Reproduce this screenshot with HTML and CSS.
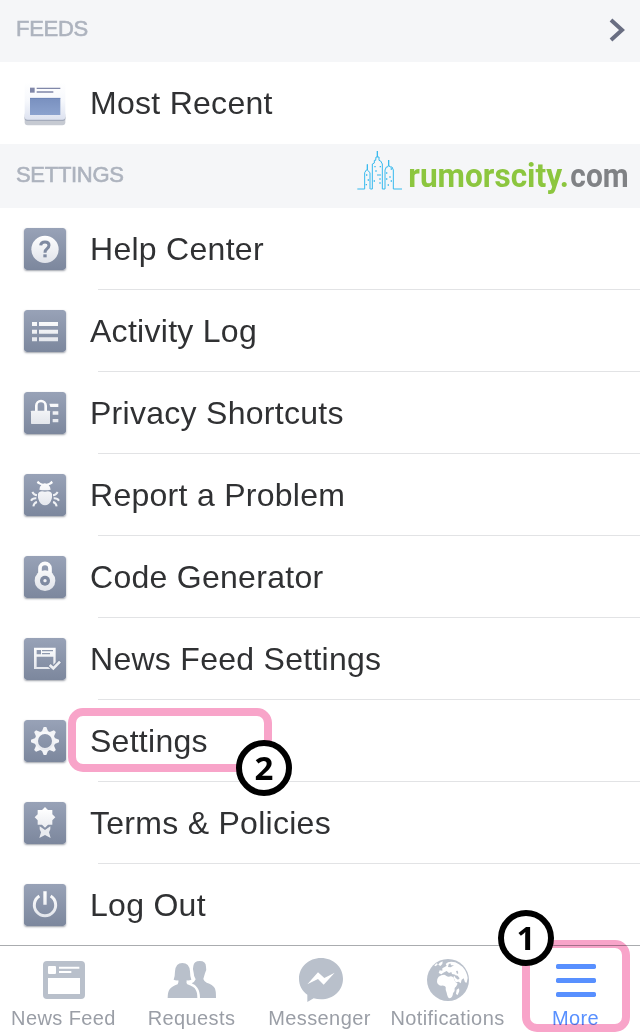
FILE: index.html
```
<!DOCTYPE html>
<html lang="en">
<head>
    <meta charset="UTF-8">
    <meta name="viewport" content="width=device-width, initial-scale=1.0">
    <title>More</title>
    <link rel="stylesheet" href="styles.css">
</head>
<body>
    <!-- Shared gradients -->
    <svg class="defs" width="0" height="0">
        <defs>
            <linearGradient id="tile" x1="0" y1="0" x2="0" y2="1">
                <stop offset="0" stop-color="#98a2b7"/>
                <stop offset="1" stop-color="#7c879d"/>
            </linearGradient>
            <linearGradient id="glyph" gradientUnits="userSpaceOnUse" x1="0" y1="20" x2="0" y2="108">
                <stop offset="0" stop-color="#ffffff"/>
                <stop offset="1" stop-color="#dfe2e9"/>
            </linearGradient>
            <linearGradient id="paper" x1="0" y1="0" x2="0" y2="1">
                <stop offset="0" stop-color="#ffffff"/>
                <stop offset="0.5" stop-color="#f6f8fc"/>
                <stop offset="1" stop-color="#dde2f0"/>
            </linearGradient>
            <linearGradient id="photo" x1="0" y1="0" x2="0" y2="1">
                <stop offset="0" stop-color="#7990bf"/>
                <stop offset="1" stop-color="#8ba2ce"/>
            </linearGradient>
        </defs>
    </svg>

    <div class="section-header feeds">
        <h2>FEEDS</h2>
        <svg class="chevron" viewBox="0 0 18 26"><path d="M3 3 L14 13 L3 23"/></svg>
    </div>

    <ul class="menu">
        <li class="menu-item last">
            <svg class="icon" viewBox="0 0 126 132">
                <rect x="2" y="90" width="122" height="40" rx="9" fill="#c6cad2"/>
                <path d="M2 104 H124 V109 Q124 117 116 117 H10 Q2 117 2 109 Z" fill="#a4abbb"/>
                <rect x="2" y="1" width="122" height="112" rx="9" fill="url(#paper)"/>
                <rect x="18" y="17" width="14" height="15" fill="#8087a8"/>
                <path d="M38 19 H109 M38 30 H88" stroke="#8087a8" stroke-width="4"/>
                <rect x="18" y="48" width="91" height="51" fill="url(#photo)"/>
                <path d="M18 49 H109" stroke="#667eb0" stroke-width="2"/>
            </svg>
            <span>Most Recent</span>
        </li>
    </ul>

    <div class="section-header">
        <h2>SETTINGS</h2>
        <svg class="logo" viewBox="39 432 861 192">
            <path class="skyline" d="M52 567 H74 V518 L79 510 H82 V493 V510 L90 518 V567 M91 567 H97 V492 L103 489 V481 H107 L108 471 H112 V453 V471 H117 V481 L122 483 L127 492 V567 H135 V510 L139 501 H143 L146 495 V480 V495 L150 501 H156 L160 510 V567 H186"/>
            <path class="windows" d="M78 525 h4 M83 540 h4 M77 554 h4 M103 500 h4 M119 500 h4 M106 513 h4 M112 525 h4 M118 525 h4 M101 543 h4 M118 537 h4 M118 549 h4 M152 507 h4 M138 519 h4 M148 531 h4 M138 537 h4 M152 543 h4 M143 555 h4"/>
            <text x="205" y="560" textLength="482" lengthAdjust="spacingAndGlyphs" fill="#8cc63f">rumorscity.</text>
            <text x="691" y="560" textLength="175" lengthAdjust="spacingAndGlyphs" fill="#808285">com</text>
        </svg>
    </div>

    <ul class="menu">
        <li class="menu-item">
            <svg class="icon tile" viewBox="0 0 126 126">
                <rect width="126" height="126" rx="8" fill="url(#tile)"/>
                <circle cx="63" cy="64" r="41" fill="url(#glyph)"/>
                <path d="M50 52 Q51 42 63 42 Q75 42 75 52 Q75 58 69 62 Q63 66 63 74" fill="none" stroke="#7f8aa1" stroke-width="9"/>
                <rect x="58" y="79" width="10" height="9" fill="#7f8aa1"/>
            </svg>
            <span>Help Center</span>
        </li>
        <li class="menu-item">
            <svg class="icon tile" viewBox="0 0 126 126">
                <rect width="126" height="126" rx="8" fill="url(#tile)"/>
                <path d="M24 36h15v12h-15z M45 36h57v12h-57z M24 59h15v12h-15z M45 59h57v12h-57z M24 82h15v12h-15z M45 82h57v12h-57z" fill="url(#glyph)"/>
            </svg>
            <span>Activity Log</span>
        </li>
        <li class="menu-item">
            <svg class="icon tile" viewBox="0 0 126 126">
                <rect width="126" height="126" rx="8" fill="url(#tile)"/>
                <path d="M37 58 V41 A14 14 0 0 1 65 41 V58" fill="none" stroke="#fbfbfc" stroke-width="8"/>
                <rect x="21" y="56" width="57" height="40" rx="2" fill="url(#glyph)"/>
                <path d="M76 35h27v10h-24z M86 58h17v10h-17z M86 81h17v10h-17z" fill="url(#glyph)"/>
            </svg>
            <span>Privacy Shortcuts</span>
        </li>
        <li class="menu-item">
            <svg class="icon tile" viewBox="0 0 126 126">
                <rect width="126" height="126" rx="8" fill="url(#tile)"/>
                <path d="M46 47 Q47 37 52 34 Q45 31 38 27 L42 20 Q49 28 57 29 Q62 27 68 29 Q76 28 83 20 L87 27 Q81 32 74 34 Q79 38 80 47 Q63 51 46 47 Z" fill="url(#glyph)"/>
                <path d="M63 53 Q80 48 84 60 Q86 78 75 89 Q63 99 51 89 Q40 78 42 60 Q46 48 63 53 Z" fill="url(#glyph)"/>
                <path d="M39 64 Q30 63 25 54 M37 73 Q26 72 21 80 M39 84 Q30 86 28 97 M87 64 Q96 63 101 54 M89 73 Q100 72 105 80 M87 84 Q96 86 98 97" fill="none" stroke="#eff1f4" stroke-width="6"/>
            </svg>
            <span>Report a Problem</span>
        </li>
        <li class="menu-item">
            <svg class="icon tile" viewBox="0 0 126 126">
                <rect width="126" height="126" rx="8" fill="url(#tile)"/>
                <path d="M48 56 V37 A15 15 0 0 1 78 37 V56" fill="none" stroke="#fbfbfc" stroke-width="11"/>
                <circle cx="63" cy="74" r="31" fill="url(#glyph)"/>
                <circle cx="63" cy="74" r="15" fill="#7f8aa1"/>
                <circle cx="63" cy="74" r="5" fill="#f0f1f5"/>
            </svg>
            <span>Code Generator</span>
        </li>
        <li class="menu-item">
            <svg class="icon tile" viewBox="0 0 126 126">
                <rect width="126" height="126" rx="8" fill="url(#tile)"/>
                <path fill-rule="evenodd" d="M30 29 H95 V93 H30 Z M38 36 V49 H51 V36 Z M54 36 V40 H87 V36 Z M54 45 V49 H78 V45 Z M38 56 V87 H88 V56 Z" fill="url(#glyph)"/>
                <path d="M76 80 L88 91 L110 69" fill="none" stroke="#828da3" stroke-width="15"/>
                <path d="M77 81 L88 91 L108 71" fill="none" stroke="#eceef2" stroke-width="8"/>
            </svg>
            <span>News Feed Settings</span>
        </li>
        <li class="menu-item">
            <svg class="icon tile" viewBox="0 0 126 126">
                <rect width="126" height="126" rx="8" fill="url(#tile)"/>
                <circle cx="63" cy="63" r="26" fill="none" stroke="url(#glyph)" stroke-width="10"/>
                <g fill="#f3f4f7">
                    <path id="tooth" d="M53 36 L59 21 H67 L73 36 Z"/>
                    <use href="#tooth" transform="rotate(45 63 63)"/>
                    <use href="#tooth" transform="rotate(90 63 63)"/>
                    <use href="#tooth" transform="rotate(135 63 63)"/>
                    <use href="#tooth" transform="rotate(180 63 63)"/>
                    <use href="#tooth" transform="rotate(225 63 63)"/>
                    <use href="#tooth" transform="rotate(270 63 63)"/>
                    <use href="#tooth" transform="rotate(315 63 63)"/>
                </g>
            </svg>
            <span>Settings</span>
            <div class="highlight highlight-settings"></div>
            <div class="step step-two">2</div>
        </li>
        <li class="menu-item">
            <svg class="icon tile" viewBox="0 0 126 126">
                <rect width="126" height="126" rx="8" fill="url(#tile)"/>
                <path d="M47 73 L63 84 L79 73 V82 L75 91 L80 108 L63 99 L46 108 L51 91 L47 82 Z" fill="#e9ebef"/>
                <path d="M63 15 L72 24 L85 24 L85 37 L94 46 L85 55 L85 68 L72 68 L63 77 L54 68 L41 68 L41 55 L32 46 L41 37 L41 24 L54 24 Z" fill="url(#glyph)"/>
            </svg>
            <span>Terms &amp; Policies</span>
        </li>
        <li class="menu-item last">
            <svg class="icon tile" viewBox="0 0 126 126">
                <rect width="126" height="126" rx="8" fill="url(#tile)"/>
                <path d="M46 36 A32 32 0 1 0 80 36" fill="none" stroke="url(#glyph)" stroke-width="9"/>
                <path d="M58 22 h10 v40 h-10 z" fill="url(#glyph)"/>
            </svg>
            <span>Log Out</span>
        </li>
    </ul>

    <nav class="tab-bar">
        <a class="tab">
            <svg viewBox="0 48 384 171">
                <path fill-rule="evenodd" d="M141 93 H243 Q255 93 255 105 V195 Q255 207 243 207 H141 Q129 207 129 195 V105 Q129 93 141 93 Z M147 108 Q144 108 144 111 V129 Q144 132 147 132 H165 Q168 132 168 129 V111 Q168 108 165 108 Z M177 110 V116 H238 V110 Z M177 123 V129 H214 V123 Z M144 144 V192 H240 V144 Z"/>
            </svg>
            <span>News Feed</span>
        </a>
        <a class="tab">
            <svg viewBox="384 48 384 171">
                <path d="M580 108 Q582 93 599 93 Q618 93 618 110 Q621 122 615 130 Q612 140 610 147 Q612 154 620 158 Q638 164 644 174 Q648 180 648 204 H600 Q600 184 592 173 Q586 164 575 160 Q584 156 587 148 Q581 138 581 128 Q577 118 580 108 Z"/>
                <path d="M547 99 Q568 99 570 124 Q570 140 574 149 Q568 152 560 151 Q558 160 562 163 Q582 170 587 179 Q592 186 592 204 H503 Q503 186 509 178 Q516 169 533 163 Q537 158 535 151 Q527 152 521 149 Q525 139 525 124 Q527 99 547 99 Z"/>
            </svg>
            <span>Requests</span>
        </a>
        <a class="tab">
            <svg viewBox="18 48 384 171">
                <path d="M213 84 C250 84 279 111 279 146 C279 181 250 208 213 208 Q201 208 191 205 L172 216 V194 C156 183 147 165 147 146 C147 111 176 84 213 84 Z"/>
                <path d="M172 163 L204 127 L223 144 L254 128 L221 164 L204 147 Z" fill="#fff"/>
            </svg>
            <span>Messenger</span>
        </a>
        <a class="tab">
            <svg viewBox="402 48 384 171">
                <circle cx="594" cy="150" r="63"/>
                <g fill="#fff">
                    <path d="M562 147 Q564 139 574 136 Q584 132 588 137 Q595 142 602 139 Q611 140 613 149 Q616 159 622 160 Q624 164 614 174 Q616 183 609 190 Q608 204 599 205 Q593 205 590 188 Q586 180 587 171 Q584 165 573 167 Q562 164 561 155 Z"/>
                    <path d="M566 129 L569 121 L577 122 L577 115 L584 111 L590 107 L587 102 L594 97 L604 95 L616 97 L627 103 L638 111 Q651 126 653 144 L650 158 L645 157 L641 145 L635 149 L632 160 L626 155 L617 157 L610 141 L616 134 L606 132 L604 126 L597 129 L590 123 L580 128 L574 133 Z"/>
                    <path d="M569 98 L578 94 L577 102 L571 108 L565 104 Z"/>
                    <path d="M553 106 L561 99 L563 104 L556 109 Z"/>
                    <path d="M620 179 L627 175 L628 183 L623 195 L618 192 Z"/>
                </g>
                <path d="M611 134 L623 137 L629 145 L624 149 L617 144 Z M618 123 L623 122 L625 130 L621 132 Z M596 103 L601 100 L603 106 L612 106 L602 112 L594 111 Z"/>
            </svg>
            <span>Notifications</span>
        </a>
        <a class="tab active">
            <svg viewBox="96 168 384 171">
                <rect x="228" y="222" width="120" height="15" rx="5"/>
                <rect x="228" y="264" width="120" height="15" rx="5"/>
                <rect x="228" y="306" width="120" height="15" rx="5"/>
            </svg>
            <span>More</span>
        </a>
        <div class="highlight highlight-more"></div>
        <div class="step step-one">1</div>
    </nav>
</body>
</html>
```
FILE: styles.css
```
body {
    font-family: "Liberation Sans", Arial, sans-serif;
    margin: 0;
    padding: 0;
    background-color: #ffffff;
    height: 1034px;
    overflow: hidden;
}

.defs {
    display: block;
}

/* Section headers */
.section-header {
    display: flex;
    justify-content: space-between;
    box-sizing: border-box;
    height: 64px;
    padding-left: 16px;
    background-color: #f5f6f8;
}

.section-header.feeds {
    height: 62px;
    padding-right: 14px;
}

.section-header h2 {
    margin: 0;
    padding-top: 18px;
    font-size: 22px;
    line-height: 25px;
    font-weight: normal;
    letter-spacing: -0.3px;
    color: #adb3be;
    -webkit-text-stroke: 0.6px #adb3be;
}

.feeds h2 {
    padding-top: 16px;
}

.chevron {
    width: 18px;
    height: 26px;
    margin-top: 17px;
    fill: none;
    stroke: #696e82;
    stroke-width: 4;
}

/* Site logo */
.logo {
    width: 287px;
    height: 64px;
}

.logo text {
    font-family: Roboto, "Open Sans", sans-serif;
    font-size: 101px;
    font-weight: 700;
}

.skyline {
    fill: none;
    stroke: #35b9ee;
    stroke-width: 3;
}

.windows {
    stroke: #35b9ee;
    stroke-width: 4;
}

/* Menu */
.menu {
    list-style: none;
    margin: 0;
    padding: 0;
}

.menu-item {
    position: relative;
    display: flex;
    height: 82px;
    padding-left: 24px;
    font-size: 32px;
    line-height: 82px;
    letter-spacing: 0.28px;
    color: #303133;
}

.menu-item::after {
    content: "";
    position: absolute;
    left: 98px;
    right: 0;
    bottom: 0;
    height: 1px;
    background-color: #e2e3e5;
}

.menu-item.last::after {
    display: none;
}

.menu-item span {
    margin-left: 24px;
}

.icon {
    width: 42px;
    height: 44px;
    margin-top: 20px;
}

.icon.tile {
    height: 42px;
    border-radius: 3px;
    box-shadow: 0 1px 2px rgba(60, 68, 85, 0.5);
}

/* Tab bar */
.tab-bar {
    position: relative;
    display: grid;
    grid-template-columns: repeat(5, 1fr);
    margin-top: -1px;
    border-top: 1px solid #aaacaf;
    height: 88px;
}

.tab {
    display: flex;
    flex-direction: column;
    align-items: center;
    font-size: 20px;
    line-height: 24px;
    letter-spacing: 0.4px;
    white-space: nowrap;
    color: #9a9ea6;
    fill: #b9c0cb;
}

.tab svg {
    width: 128px;
    height: 57px;
}

.tab span {
    margin-top: 3px;
    margin-left: -1px;
}

.tab.active {
    color: #5890ff;
    fill: #5890ff;
}

/* Walkthrough marks */
.highlight {
    position: absolute;
    box-sizing: border-box;
    border: 8px solid #f8a4c9;
    border-radius: 15px;
    mix-blend-mode: multiply;
}

.highlight-settings {
    left: 68px;
    top: 8px;
    width: 204px;
    height: 64px;
}

.highlight-more {
    left: 522px;
    top: -6px;
    width: 108px;
    height: 92px;
}

.step {
    position: absolute;
    z-index: 1;
    box-sizing: border-box;
    width: 56px;
    height: 56px;
    border: 6px solid #000000;
    border-radius: 50%;
    background-color: #ffffff;
    font-family: "Open Sans", "Noto Sans", sans-serif;
    font-size: 33px;
    font-weight: 700;
    line-height: 44px;
    letter-spacing: 0;
    text-align: center;
    color: #000000;
}

.step-one {
    left: 498px;
    top: -36px;
}

.step-two {
    left: 236px;
    top: 40px;
}
```
